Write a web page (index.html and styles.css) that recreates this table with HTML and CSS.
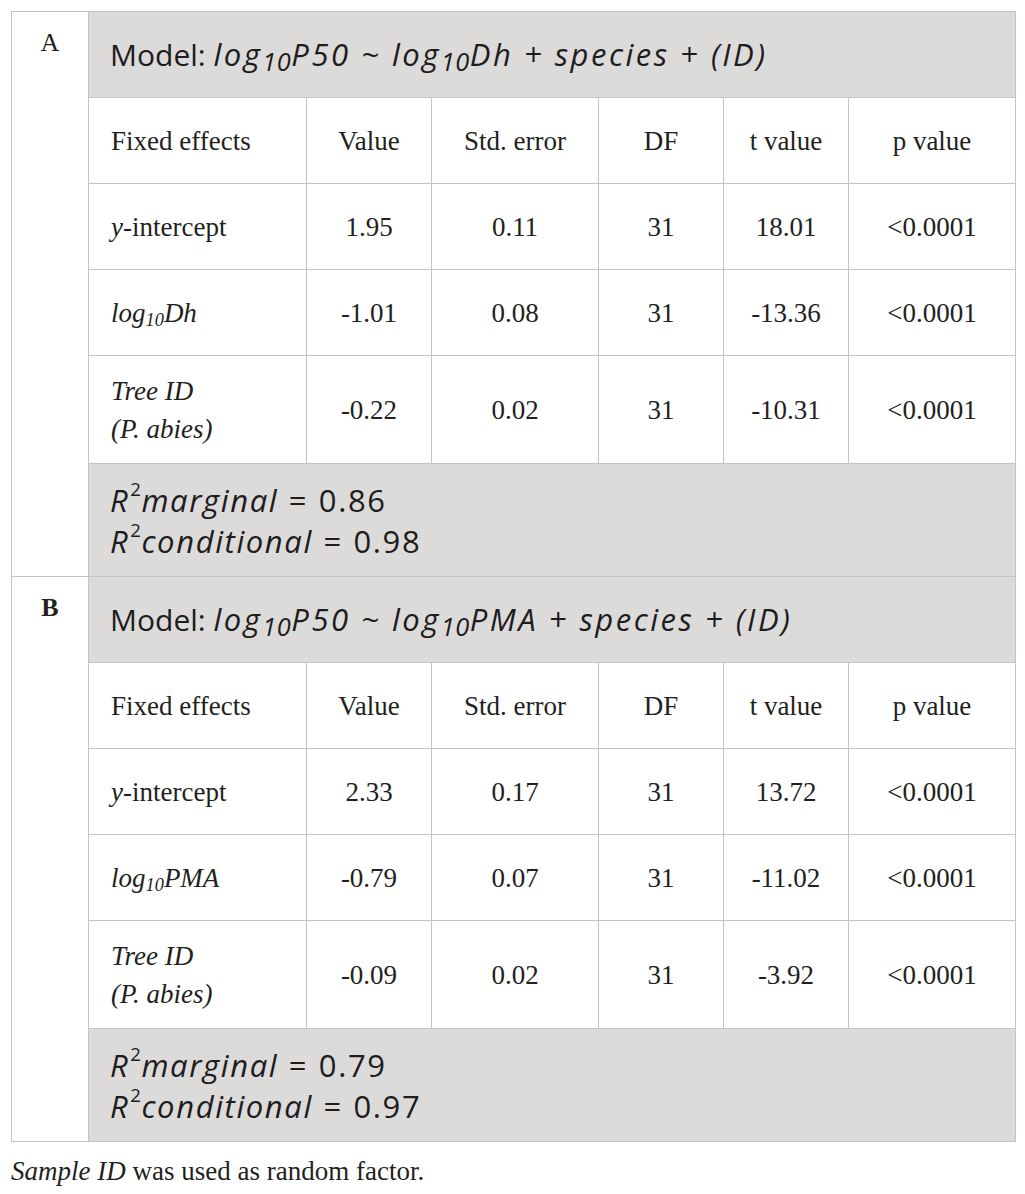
FILE: index.html
```html
<!DOCTYPE html>
<html lang="en">
<head>
    <meta charset="UTF-8">
    <title>Mixed model results</title>
    <link rel="stylesheet" href="styles.css">
</head>
<body>
    <div class="wrap">
        <table class="results">
            <colgroup>
                <col class="c-letter">
                <col class="c-name">
                <col class="c-val">
                <col class="c-err">
                <col class="c-df">
                <col class="c-t">
                <col class="c-p">
            </colgroup>

            <!-- Section A -->
            <tr>
                <td class="letter" rowspan="6">A</td>
                <td class="model" colspan="6">Model: <i>log<sub>10</sub>P50 ~ log<sub>10</sub>Dh + species + (ID)</i></td>
            </tr>
            <tr class="row">
                <td class="name">Fixed effects</td>
                <td>Value</td>
                <td>Std. error</td>
                <td>DF</td>
                <td>t value</td>
                <td>p value</td>
            </tr>
            <tr class="row">
                <td class="name"><i>y</i>-intercept</td>
                <td>1.95</td>
                <td>0.11</td>
                <td>31</td>
                <td>18.01</td>
                <td>&lt;0.0001</td>
            </tr>
            <tr class="row">
                <td class="name"><i>log<sub>10</sub>Dh</i></td>
                <td>-1.01</td>
                <td>0.08</td>
                <td>31</td>
                <td>-13.36</td>
                <td>&lt;0.0001</td>
            </tr>
            <tr class="row tall">
                <td class="name"><i>Tree ID<br>(P. abies)</i></td>
                <td>-0.22</td>
                <td>0.02</td>
                <td>31</td>
                <td>-10.31</td>
                <td>&lt;0.0001</td>
            </tr>
            <tr>
                <td class="fit" colspan="6">
                    <i>R</i><sup>2</sup><i>marginal</i> = 0.86<br>
                    <i>R</i><sup>2</sup><i>conditional</i> = 0.98
                </td>
            </tr>

            <!-- Section B -->
            <tr>
                <td class="letter bold" rowspan="6">B</td>
                <td class="model" colspan="6">Model: <i>log<sub>10</sub>P50 ~ log<sub>10</sub>PMA + species + (ID)</i></td>
            </tr>
            <tr class="row">
                <td class="name">Fixed effects</td>
                <td>Value</td>
                <td>Std. error</td>
                <td>DF</td>
                <td>t value</td>
                <td>p value</td>
            </tr>
            <tr class="row">
                <td class="name"><i>y</i>-intercept</td>
                <td>2.33</td>
                <td>0.17</td>
                <td>31</td>
                <td>13.72</td>
                <td>&lt;0.0001</td>
            </tr>
            <tr class="row">
                <td class="name"><i>log<sub>10</sub>PMA</i></td>
                <td>-0.79</td>
                <td>0.07</td>
                <td>31</td>
                <td>-11.02</td>
                <td>&lt;0.0001</td>
            </tr>
            <tr class="row tall">
                <td class="name"><i>Tree ID<br>(P. abies)</i></td>
                <td>-0.09</td>
                <td>0.02</td>
                <td>31</td>
                <td>-3.92</td>
                <td>&lt;0.0001</td>
            </tr>
            <tr>
                <td class="fit" colspan="6">
                    <i>R</i><sup>2</sup><i>marginal</i> = 0.79<br>
                    <i>R</i><sup>2</sup><i>conditional</i> = 0.97
                </td>
            </tr>
        </table>

        <p class="note"><i>Sample ID</i> was used as random factor.</p>
    </div>
</body>
</html>
```

FILE: styles.css
```css
/* Global */
* {
    box-sizing: border-box;
    margin: 0;
    padding: 0;
}

body {
    background: #fff;
    color: #231f20;
    font-family: 'Liberation Serif', 'Times New Roman', serif;
}

.wrap {
    padding: 11px 0 0 11px;
}

/* Table */
.results {
    width: 1004px;
    border-collapse: collapse;
    table-layout: fixed;
    font-size: 27px;
}

.c-letter { width: 77px; }
.c-name { width: 218px; }
.c-val { width: 125px; }
.c-err { width: 167px; }
.c-df { width: 125px; }
.c-t { width: 125px; }
.c-p { width: 167px; }

.results td {
    border: 1px solid #c4c4c4;
    text-align: center;
    vertical-align: middle;
    line-height: 38px;
    padding: 0 8px;
}

.results sub {
    font-size: 0.68em;
    line-height: 0;
    vertical-align: -0.2em;
}

.results sup {
    font-size: 0.6em;
    line-height: 0;
    vertical-align: 0.75em;
}

.row {
    height: 86px;
}

.row.tall {
    height: 108px;
}

.results td.name {
    text-align: left;
    padding-left: 22px;
}

.results td.letter {
    vertical-align: top;
    padding-top: 16px;
    font-size: 26px;
    line-height: 30px;
}

.letter.bold {
    font-weight: bold;
}

/* Gray bands */
.results td.model,
.results td.fit {
    background: #dcdbd9;
    text-align: left;
    padding-left: 21px;
    font-family: 'Open Sans', 'Lato', sans-serif;
    font-size: 30px;
    color: #1e1c1d;
}

.results td.model {
    height: 86px;
}

.results td.model i {
    font-size: 31px;
    letter-spacing: 2.5px;
    word-spacing: 0;
}

.results td.model sub {
    font-size: 0.82em;
    letter-spacing: 0.5px;
    vertical-align: -0.18em;
}

.results td.fit {
    height: 113px;
    line-height: 41px;
    padding-top: 2px;
    font-size: 31px;
    letter-spacing: 1.6px;
    word-spacing: 1px;
}

.results td.fit sup {
    font-size: 0.6em;
    vertical-align: 0.85em;
    margin-left: 1px;
    letter-spacing: 0.5px;
}

/* Caption */
.note {
    font-size: 27px;
    line-height: 30px;
    margin-top: 14px;
}
```
